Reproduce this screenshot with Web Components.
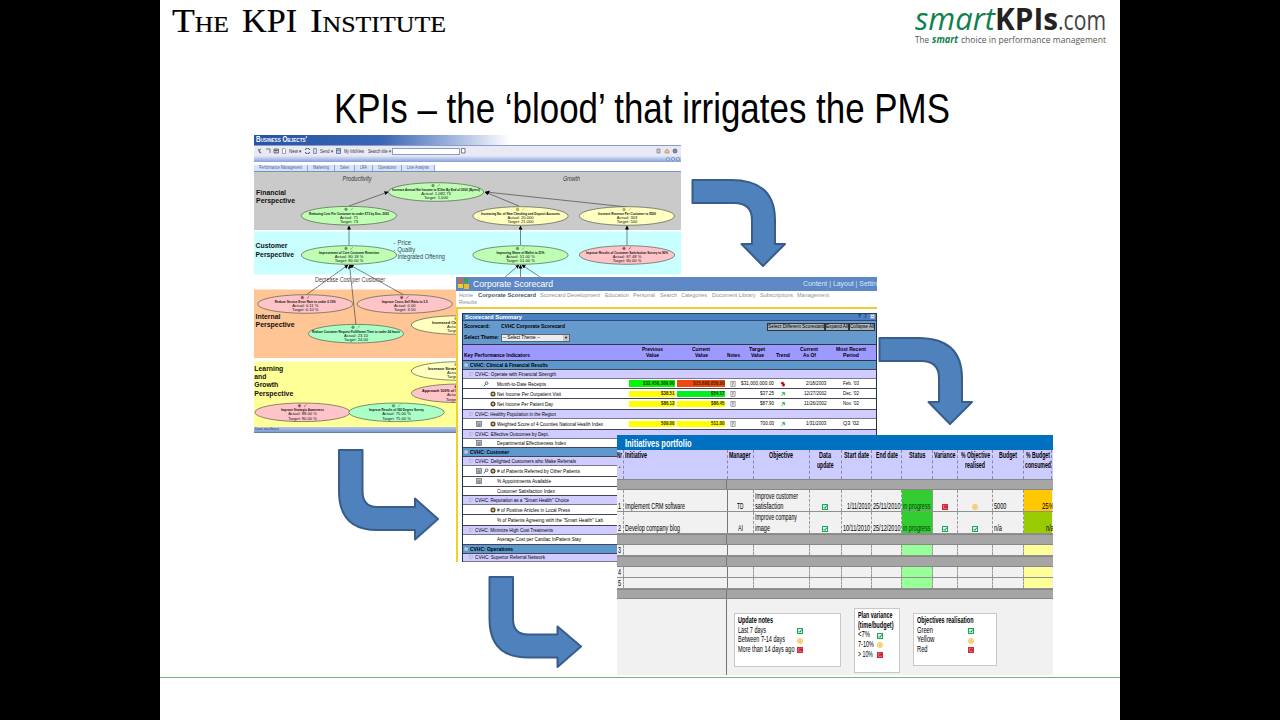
<!DOCTYPE html>
<html lang="en">
<head>
<meta charset="utf-8">
<title>KPIs</title>
<style>
  body {
    margin: 0;
    background: #000;
    overflow: hidden;
    font-family: "Liberation Sans", Arial, sans-serif;
  }
</style>
</head>
<body>
<kpi-slide>
  <brand-header slot="header"></brand-header>
  <fit-text slot="title" w="616" style="font-size:42px">KPIs – the ‘blood’ that irrigates the PMS</fit-text>
  <strategy-map style="left:94px;top:135px"></strategy-map>
  <corporate-scorecard style="left:296px;top:277px"></corporate-scorecard>
  <initiatives-portfolio style="left:457px;top:435px"></initiatives-portfolio>
  <bent-arrow kind="down" style="left:531px;top:178px"></bent-arrow>
  <bent-arrow kind="down" style="left:718px;top:336px"></bent-arrow>
  <bent-arrow kind="right" style="left:178px;top:448px"></bent-arrow>
  <bent-arrow kind="right-short" style="left:328px;top:575px"></bent-arrow>
</kpi-slide>

<script>
const fit = (text, w, size, css = "") =>
  `<fit-text w="${w}" style="font-size:${size}px;${css}">${text}</fit-text>`;

// one line of text, squeezed or stretched to the width in its "w" attribute
class FitText extends HTMLElement {
  constructor() {
    super();
    this.attachShadow({ mode: "open" }).innerHTML = `
    <style>
    :host{
        display: inline-block;
        vertical-align: top;
        line-height: 1;
        white-space: nowrap;
        flex: none;
        text-align: left;
    }
    span{
        display: inline-block;
        vertical-align: top;
        transform-origin: 0 50%;
    }
    </style><span><slot></slot></span>`;
  }

  connectedCallback() {
    const w = parseFloat(this.getAttribute("w"));
    const span = this.shadowRoot.querySelector("span");
    const real = span.getBoundingClientRect().width;
    this.style.width = w + "px";
    if (real > 0) span.style.transform = `scaleX(${w / real})`;
  }
}
customElements.define("fit-text", FitText);

class StatusIcon extends HTMLElement {
  connectedCallback() {
    const shapes = {
      ok: `<rect x=".5" y=".5" width="5" height="5" fill="#d8f5e2" stroke="#18a860"/><path d="M1.7 3.2l1.1 1.1L4.9 1.6" fill="none" stroke="#108848"/>`,
      mid: `<circle cx="3" cy="3" r="2.5" fill="#ffe9a0" stroke="#f0b83c" stroke-width=".8"/><path d="M1.8 3.8q1.2-1.2 2.4 0M2 2.2h.6M3.4 2.2h.6" fill="none" stroke="#d89820" stroke-width=".6"/>`,
      bad: `<rect x=".5" y=".5" width="5" height="5" fill="#e86874" stroke="#d82838"/><path d="M1.8 4.4L4.3 1.8M2 2.2h2.4v2" fill="none" stroke="#8c1c28" stroke-width=".8"/>`,
      note: `<rect x=".5" y=".5" width="5" height="5" fill="#c4c8d0" stroke="#606878" stroke-width=".7"/><path d="M1.5 2.2h3M1.5 3.5h3M1.5 4.6h3" stroke="#485060" stroke-width=".5"/>`,
      find: `<circle cx="3.6" cy="2.2" r="1.4" fill="#d8ecff" stroke="#304870" stroke-width=".7"/><path d="M2.6 3.2L.9 5.2" stroke="#304870" stroke-width=".9"/>`,
      ring: `<circle cx="3" cy="3" r="1.9" fill="#fff0b0" stroke="#4c3c18" stroke-width="1.2"/><circle cx="3" cy="3" r=".7" fill="#806020"/>`,
      page: `<rect x=".9" y=".3" width="4.2" height="5.4" fill="#f4f4f4" stroke="#555" stroke-width=".5"/><path d="M2 1.8h2M2 3h2M2 4.2h1" stroke="#444" stroke-width=".5"/>`,
      up: `<path d="M1.3 5.2L3.8 2M2 1.4h2.7v2.6z" fill="#30c050" stroke="#30b050" stroke-width=".7"/>`,
      down: `<path d="M1.4 1.2h2.2v1.4l1.3.4-.8 2.4-2-.8.6-1.2-1.6-.6z" fill="#c00010" stroke="#900"  stroke-width=".4"/>`,
      minus: `<rect x=".6" y=".6" width="4.8" height="4.8" fill="#eef" stroke="#8890b8" stroke-width=".6"/><path d="M1.7 3h2.6" stroke="#333" stroke-width=".7"/>`
    };
    this.attachShadow({ mode: "open" }).innerHTML = `
    <style>
    :host{
        display: block;
        width: 6px;
        height: 6px;
        flex: none;
    }
    svg{ display: block; width: 100%; height: 100%; }
    </style>
    <svg viewBox="0 0 6 6">${shapes[this.getAttribute("kind")] || ""}</svg>`;
  }
}
customElements.define("status-icon", StatusIcon);
const icon = (kind, css = "") => `<status-icon kind="${kind}" style="${css}"></status-icon>`;

class KpiSlide extends HTMLElement {
  constructor() {
    super();
    this.attachShadow({ mode: "open" }).innerHTML = `
    <style>
    :host{
        display: block;
        position: relative;
        width: 960px;
        height: 720px;
        margin: 0 auto;
        background: #fff;
        color: #000;
        overflow: hidden;
    }
    .title{
        display: flex;
        justify-content: center;
        padding-left: 4px;
        height: 42px;
        margin-top: 24px;
    }
    .rule{
        position: absolute;
        left: 0;
        right: 0;
        top: 677px;
        height: 1px;
        background: #7fb07f;
    }
    ::slotted(strategy-map), ::slotted(corporate-scorecard),
    ::slotted(initiatives-portfolio), ::slotted(bent-arrow){
        position: absolute;
    }
    </style>
    <slot name="header"></slot>
    <div class="title"><slot name="title"></slot></div>
    <slot></slot>
    <div class="rule"></div>`;
  }
}
customElements.define("kpi-slide", KpiSlide);

class BrandHeader extends HTMLElement {
  connectedCallback() {
    this.attachShadow({ mode: "open" }).innerHTML = `
    <style>
    :host{
        display: flex;
        justify-content: space-between;
        height: 64px;
        padding: 0 14px 0 12px;
        box-sizing: border-box;
    }
    .institute{
        display: flex;
        gap: 13px;
        padding-top: 4px;
        font-family: "Liberation Serif", serif;
        font-variant: small-caps;
        -webkit-text-stroke: .2px #000;
    }
    .smart{
        font-family: "Open Sans", sans-serif;
        padding-top: 3px;
        width: 191px;
    }
    .name{ display: flex; align-items: baseline; height: 32px; color: #222; }
    .tag{ display: flex; justify-content: space-between; color: #555; }
    .green{ color: #12804c; font-style: italic; }
    .tag .green{ display: flex; }
    </style>
    <div class="institute">${fit("The", 57, 33.5)}${fit("KPI", 55, 33.5)}${fit("Institute", 136, 33.5)}</div>
    <div class="smart">
      <div class="name">
        ${fit("smart", 80, 31, "color:#12804c;font-style:italic")}${fit("KPIs", 63, 30, "font-weight:700")}${fit(".com", 48, 27, "font-weight:400;color:#444")}
      </div>
      <div class="tag">
        ${fit("The", 14, 9.8)}<span class="green">${fit("smart", 26, 9.8, "font-weight:700")}</span>${fit("choice in performance management", 145, 9.8)}
      </div>
    </div>`;
  }
}
customElements.define("brand-header", BrandHeader);

class BentArrow extends HTMLElement {
  connectedCallback() {
    const paths = {
      down: "M1.5 2H40Q84 2 84 42V66H94L72 88L50.5 66H61V42Q61 25 43 25H1.5Z",
      right: "M1 2H24.5V43Q24.500 59 39 59H77V50.5L100 71L77 91.5V82H39Q1 82 1 43Z",
      "right-short": "M1.5 2H25V44Q25 59.5 40 59.5H69.5V51.5L93 71.5L69.5 92V82.5H40Q1.5 82.500 1.5 44Z"
    };
    this.attachShadow({ mode: "open" }).innerHTML = `
    <style>
    :host{ display: block; width: 104px; height: 96px; }
    svg{ display: block; }
    </style>
    <svg width="104" height="96"><path d="${paths[this.getAttribute("kind")]}" fill="#4f81bd" stroke="#385d8a" stroke-width="2" stroke-linejoin="round"/></svg>`;
  }
}
customElements.define("bent-arrow", BentArrow);

// cx, cy, fill, title, title width, actual, target
const GREEN = "#bfffb4", YELLOW = "#ffffc0", RED = "#ffc4c8", MINT = "#aaffc6";
const NODES = [
  [436, 192, GREEN, "Increase Annual Net Income to $10m By End of 2003 (Bytext)", 88, "1,082.73", "1,000"],
  [349, 215.7, GREEN, "Reducing Cost Per Customer to under $73 by Dec. 2003", 80, "71", "73"],
  [520.5, 216, YELLOW, "Increasing No. of New Checking and Deposit Accounts", 79, "20,000", "21,000"],
  [627, 216, YELLOW, "Increase Revenue Per Customer to $500", 58, "303", "500"],
  [349, 255, GREEN, "Improvement of Core Customer Retention", 60, "80.18 %", "80.00 %"],
  [520.5, 255, GREEN, "Improving Share of Wallet to 51%", 48, "51.00 %", "51.00 %"],
  [627, 255, RED, "Improve Results of Customer Satisfaction Survey to 90%", 82, "87.48 %", "90.00 %"],
  [305.3, 304, RED, "Reduce Service Error Rate to under 0.10%", 61, "0.11 %", "0.10 %"],
  [404.7, 304, RED, "Improve Cross-Sell Ratio to 3.5", 46, "0.00", "3.50"],
  [356, 333.7, MINT, "Reduce Customer Request Fulfillment Time to under 24 hours", 88, "23.10", "24.00"],
  [459, 325, YELLOW, "Increased Channel Utilization", 54, "20.00", "20.00"],
  [459, 371, YELLOW, "Increase Strategic Job Coverage", 62, "90.00", "90.00"],
  [459, 393.3, RED, "Approach 100% of Information Availability", 74, "80.00", "100.00"],
  [302.5, 412.3, RED, "Improve Strategic Awareness", 43, "88.00 %", "90.00 %"],
  [396.5, 412.3, MINT, "Improve Results of 360 Degree Survey", 55, "75.00 %", "75.00 %"]
];
const LINKS = [
  [349, 206, 388, 192], [519, 206, 485, 192], [627, 207, 486, 192],
  [349, 245, 349, 226], [520.5, 245, 520.5, 226], [627, 245, 627, 226],
  [306, 295, 348, 265], [356, 325, 349.5, 265], [404, 295, 350, 265],
  [503, 279, 519, 265], [520.5, 279, 520.5, 265], [543, 279, 522, 265]
];

class StrategyMap extends HTMLElement {
  node([cx, cy, fill, title, w, actual, target]) {
    const dot = fill === RED ? "#d03040" : fill === YELLOW ? "#e0c020" : "#50b060";
    return `<ellipse cx="${cx}" cy="${cy}" rx="47.7" ry="9.3" fill="${fill}" stroke="#55604c" stroke-width=".7"/>
      <circle cx="${cx - 3}" cy="${cy - 6.5}" r="1.3" fill="${dot}" stroke="#555" stroke-width=".4"/>
      <path d="M${cx + 1.5} ${cy - 5.5}l2.4-2.2" stroke="${dot}" stroke-width=".8"/>
      <text x="${cx - w / 2}" y="${cy - 0.9}" textLength="${w}" lengthAdjust="spacingAndGlyphs" font-weight="700">${title}</text>
      <text x="${cx}" y="${cy + 3.1}" text-anchor="middle">Actual: ${actual}</text>
      <text x="${cx}" y="${cy + 7.2}" text-anchor="middle">Target: ${target}</text>`;
  }

  label(x, y, w, text, cls = "") {
    return `<text class="${cls}" x="${x}" y="${y}" textLength="${w}" lengthAdjust="spacingAndGlyphs">${text}</text>`;
  }

  connectedCallback() {
    const tabs = [["Performance Management", 43], ["Marketing", 16], ["Sales", 9], ["LRA", 7], ["Operations", 18], ["Line Analysis", 22]];
    this.attachShadow({ mode: "open" }).innerHTML = `
    <style>
    :host{
        display: block;
        width: 427px;
        height: 301px;
        background: #fff;
    }
    .brand{
        display: flex;
        height: 10px;
        padding: 1px 0 0 2px;
        box-sizing: border-box;
        color: #fff;
        font-variant: small-caps;
        background: linear-gradient(90deg, #2653a4, #3b66b4 30%, #9db2dc 46%, #fff 60%);
    }
    .tools{
        display: flex;
        align-items: center;
        gap: 3px;
        height: 11px;
        padding: 0 3px;
        background: #e9e9f5;
        color: #333;
        box-sizing: border-box;
        border-top: 1px solid #8c9ccc;
    }
    .tools svg{ flex: none; }
    .tools i{
        width: 66px;
        height: 5px;
        border: 1px solid #8a9cc0;
        background: #fff;
        margin: 0 -2px;
    }
    .tools .end{ margin-left: auto; }
    .strip{
        height: 6px;
        background: linear-gradient(#dfe6f8, #86a0d6);
        display: flex;
        justify-content: flex-end;
        align-items: center;
        gap: 1px;
        padding-right: 1px;
    }
    .strip b{ width: 2px; height: 2px; border-radius: 2px; border: 1px solid #7c94c8; background: #dce6fa; }
    .tabs{
        display: flex;
        height: 10px;
        padding: 3px 0 0;
        box-sizing: border-box;
        border-bottom: 1px solid #7890c8;
        color: #4660a4;
    }
    .tabs div{
        display: flex;
        background: #d9e4f8;
        border-right: 1px solid #90a4d0;
        padding: 1px 5px 0;
    }
    .map{ display: block; }
    text{ font-size: 4.1px; fill: #111; }
    text.big{ font-size: 8px; font-weight: 700; }
    text.mid{ font-size: 6.8px; fill: #444; }
    text.it{ font-size: 6.8px; font-style: italic; fill: #333; }
    .status{
        height: 6px;
        background: linear-gradient(#b4c6ea, #7e9ad0);
        border-bottom: 1px solid #6c7ca0;
        padding: 0 1px;
        box-sizing: border-box;
        color: #203878;
        display: flex;
        align-items: center;
    }
    </style>
    <div class="brand">${fit("Business Objects'", 51, 8.2, "font-weight:700")}</div>
    <div class="tools">
      <svg width="22" height="6"><path d="M1 1l3 4M4 1a2 2 0 1 0 0 4M9 1h4v4M17 1h4.500v4h-4.500zM17 2.500h4.500M19 1v4" fill="none" stroke="#556" stroke-width=".8"/></svg>
      <svg width="4" height="6"><path d="M.5.500h2l1 1v4h-3z" fill="#fff" stroke="#667" stroke-width=".6"/></svg>
      ${fit("New ▾", 13, 5)}
      <svg width="5" height="6"><path d="M4.500 2a2 2 0 0 0-4 0M.5 4a2 2 0 0 0 4 0" fill="none" stroke="#246" stroke-width=".9"/></svg>
      <svg width="4" height="6"><path d="M.5.500h3v5h-3z" fill="#ccd8f4" stroke="#567" stroke-width=".6"/></svg>
      ${fit("Send ▾", 13, 5)}
      <svg width="5" height="6"><path d="M.5.500h4v5h-4zM.5 2.200h4" fill="#b8ccf0" stroke="#346" stroke-width=".6"/></svg>
      ${fit("My InfoView", 20, 5, "margin-right:1px")}
      ${fit("Search title ▾", 23, 5)}
      <i></i>
      <svg width="5" height="6"><path d="M.5.500h3.500v4.500h-3.500z" fill="#fff" stroke="#446" stroke-width=".7"/></svg>
      <svg class="end" width="22" height="6"><path d="M1 1h3v4h-3z" fill="#ccd" stroke="#778" stroke-width=".7"/><path d="M9 5V3l2-2 2 2v2z" fill="#f0c860" stroke="#987" stroke-width=".6"/><circle cx="19" cy="3" r="2" fill="#7890c8" stroke="#445" stroke-width=".6"/></svg>
    </div>
    <div class="strip"><b></b><b></b><b></b></div>
    <div class="tabs">${tabs.map(([t, w]) => `<div>${fit(t, w, 4.8)}</div>`).join("")}</div>
    <svg class="map" width="427" height="255" viewBox="254 172 427 255">
      <defs><marker id="tip" markerWidth="4" markerHeight="4" refX="3.5" refY="2" orient="auto" markerUnits="userSpaceOnUse"><path d="M0 0L4 2L0 4z"/></marker></defs>
      <rect x="254" y="172" width="427" height="58" fill="#cacaca"/>
      <rect x="254" y="231.5" width="427" height="43" fill="#c9ffff"/>
      <rect x="254" y="289.5" width="427" height="68.5" fill="#ffc595"/>
      <rect x="254" y="361.5" width="427" height="66" fill="#ffff98"/>
      ${this.label(315, 281.7, 70, "Decrease Cost per Customer", "mid")}
      ${LINKS.map(l => `<line x1="${l[0]}" y1="${l[1]}" x2="${l[2]}" y2="${l[3]}" stroke="#333" stroke-width=".6" marker-end="url(#tip)"/>`).join("")}
      ${NODES.map(n => this.node(n)).join("")}
      ${this.label(256, 194.5, 30, "Financial", "big")}
      ${this.label(256, 202.8, 39, "Perspective", "big")}
      ${this.label(255.5, 248, 32, "Customer", "big")}
      ${this.label(255.5, 256.5, 38.5, "Perspective", "big")}
      ${this.label(255.5, 318.700, 25, "Internal", "big")}
      ${this.label(255.5, 327, 39, "Perspective", "big")}
      ${this.label(254.3, 370.5, 29, "Learning", "big")}
      ${this.label(254.3, 378.8, 12, "and", "big")}
      ${this.label(254.3, 387.2, 24, "Growth", "big")}
      ${this.label(254.3, 395.6, 39, "Perspective", "big")}
      ${this.label(342.5, 181.3, 29, "Productivity", "it")}
      ${this.label(563, 181, 17, "Growth", "it")}
      ${this.label(397.5, 245, 13.5, "Price", "mid")}
      ${this.label(397.5, 252, 17.5, "Quality", "mid")}
      ${this.label(397.5, 259.3, 47.5, "Integrated Offering", "mid")}
      ${this.label(393.5, 245, 1.6, "-", "mid")}
      ${this.label(393.5, 252, 1.6, "-", "mid")}
    </svg>
    <div class="status">${fit("Done excellence", 24, 4.2)}</div>`;
  }
}
customElements.define("strategy-map", StrategyMap);

// kind, bottom edge, text, text width, icons, values
const KPI_ROWS = [
  ["group", 369.3, "CVHC: Clinical &amp; Financial Results", 78],
  ["sub", 378.7, "CVHC: Operate with Financial Strength", 81],
  ["row", 389, "Month-to-Date Receipts", 49, ["", "find", ""], ["$32,456,389.00", "#00f800", "$15,698,858.00", "#f04810", "$31,000,000.00", "down", "2/18/2003", "Feb. '03"]],
  ["row", 399.2, "Net Income Per Outpatient Visit", 64, ["", "", "ring"], ["$38.51", "#ff0", "$54.17", "#00f020", "$37.25", "up", "12/27/2002", "Dec. '02"]],
  ["row", 409.5, "Net Income Per Patient Day", 56, ["", "", "ring"], ["$86.12", "#ff0", "$86.45", "#ff0", "$87.90", "up", "11/26/2002", "Nov. '02"]],
  ["sub", 418.8, "CVHC: Healthy Population in the Region", 81],
  ["row", 429.3, "Weighted Score of 4 Counties National Health Index", 106, ["note", "", "ring"], ["509.00", "#ff0", "511.00", "#ff0", "700.00", "up", "1/31/2003", "Q3 '02"]],
  ["sub", 438.3, "CVHC: Effective Outcomes by Dept.", 74],
  ["row", 448.2, "Departmental Effectiveness Index", 69, ["note", "", ""]],
  ["group", 457.2, "CVHC: Customer", 39],
  ["sub", 465.6, "CVHC: Delighted Customers who Make Referrals", 101],
  ["row", 476.3, "# of Patients Referred by Other Patients", 83, ["note", "find", "ring"]],
  ["row", 486.6, "% Appointments Available", 54, ["note", "", ""]],
  ["row", 496, "Customer Satisfaction Index", 58, ["", "", ""]],
  ["sub", 504.7, "CVHC: Reputation as a \"Smart Health\" Choice", 94],
  ["row", 515.2, "# of Positive Articles in Local Press", 73, ["", "", "ring"]],
  ["row", 525.7, "% of Patients Agreeing with the \"Smart Health\" Lab", 106, ["", "", ""]],
  ["sub", 534.5, "CVHC: Minimize High Cost Treatments", 78],
  ["row", 544.5, "Average Cost per Cardiac InPatient Stay", 84, ["", "", ""]],
  ["group", 553.5, "CVHC: Operations", 43],
  ["sub", 562, "CVHC: Superior Referral Network", 70]
];

class CorporateScorecard extends HTMLElement {
  row([kind, , text, w, icons, v], i) {
    const top = i ? KPI_ROWS[i - 1][1] : 360.3;
    const h = `style="height:${(KPI_ROWS[i][1] - top).toFixed(1)}px"`;
    if (kind !== "row") {
      return `<div class="${kind}" ${h}>${icon("minus", "width:4px;height:4px")}${fit(text, w, 6, kind === "group" ? "font-weight:700" : "")}</div>`;
    }
    const vals = v ? `
      <span class="chip" style="background:${v[1]}">${fit(v[0], v[0].length * 2.25, 5.4, "font-weight:700")}</span>
      <span class="chip" style="background:${v[3]}">${fit(v[2], v[2].length * 2.25, 5.4, "font-weight:700")}</span>
      <span class="c">${icon("page")}</span>
      <span class="r">${fit(v[4], v[4].length * 2.35, 5.6)}</span>
      <span class="c">${icon(v[5])}</span>
      <span class="r">${fit(v[6], v[6].length * 2.25, 5.6)}</span>
      <span class="c">${fit(v[7], 16, 5.6)}</span>` : "";
    return `<div class="row" ${h}><span class="kpi">${icons.map(k => icon(k)).join("")}${fit(text, w, 6)}</span>${vals}</div>`;
  }

  connectedCallback() {
    const nav = [["Home", 14], ["Corporate Scorecard", 58, "font-weight:700;color:#44566c"], ["Scorecard Development", 60], ["Education", 24], ["Personal", 22], ["Search", 17], ["Categories", 26], ["Document Library", 43.5], ["Subscriptions", 33], ["Management", 32]];
    const heads = [["Previous", 21, "Value", 13], ["Current", 18, "Value", 13], ["", 0, "Notes", 13], ["Target", 16, "Value", 13], ["", 0, "Trend", 14], ["Current", 18, "As Of", 13], ["Most Recent", 30, "Period", 16]];
    this.attachShadow({ mode: "open" }).innerHTML = `
    <style>
    :host{
        display: block;
        width: 421px;
        height: 285px;
        background: #fff;
        overflow: hidden;
    }
    .bar{
        display: flex;
        align-items: center;
        height: 13.5px;
        background: #5d88c5;
        color: #fff;
        padding-left: 2px;
    }
    .bar svg{ margin-right: 4px; }
    .bar .menu{ display: flex; margin-left: auto; color: #d8e6fa; }
    .nav{
        display: flex;
        flex-wrap: wrap;
        align-content: flex-start;
        gap: 2px 4.5px;
        padding: 2px 30px 0 3px;
        height: 16px;
        box-sizing: border-box;
        color: #8791a0;
    }
    .body{
        border-top: 2px solid #f3c838;
        border-left: 2px solid #f6d020;
        padding: 4px 0 0 4px;
        height: 260px;
        box-sizing: border-box;
    }
    .sheet{ border-left: 1px solid #234; border-right: 1px solid #234; }
    .summary{
        height: 8.5px;
        display: flex;
        align-items: center;
        padding: 0 1px 0 2px;
        background: #4d80c2;
        border-top: 1px solid #245;
        border-bottom: 1px solid #2c4c80;
        box-sizing: border-box;
        color: #fff;
    }
    .summary span{ margin-left: auto; display: flex; gap: 3px; color: #123; }
    .pick{
        height: 23.3px;
        background: #6699cc;
        display: grid;
        grid-template: 11px 11px / 37px 1fr auto;
        align-items: center;
        padding: .5px 0 0 1px;
        box-sizing: border-box;
    }
    .btns{ display: flex; margin-right: 1px; }
    .btns span{ display: flex; border: 1px solid #333; background: #a9b4bc; padding: .5px 0; }
    .drop{
        width: 66px;
        height: 6px;
        background: #ececec;
        border: 1px solid #567;
        display: flex;
        align-items: center;
        justify-content: space-between;
        padding-left: 1px;
        font-size: 4px;
    }
    .drop b{ background: #c8c8c8; line-height: 6px; width: 6px; text-align: center; }
    .head, .row{
        display: grid;
        grid-template-columns: 165px 48px 50px 14px 34px 18px 34.5px 48.5px;
        align-items: center;
    }
    .head{
        height: 16.3px;
        background: #9c99ff;
        border-top: 1px solid #334;
        border-bottom: 1px solid #334;
        box-sizing: border-box;
    }
    .head span{ display: flex; flex-direction: column; align-items: center; justify-content: flex-end; height: 13px; gap: .8px; }
    .head .first{ align-items: flex-start; padding-left: 1px; }
    .group, .sub, .row{ box-sizing: border-box; border-bottom: 1px solid #445; }
    .group, .sub{ display: flex; align-items: center; gap: 1.5px; }
    .group{ background: #5c98cc; padding-left: 1px; }
    .sub{ background: #d0ccff; padding-left: 6px; border-bottom-color: #778; }
    .kpi{ display: flex; align-items: center; padding-left: 12.5px; }
    .kpi status-icon{ margin-right: 1px; }
    .kpi fit-text{ margin-left: .5px; }
    .chip{ display: flex; justify-content: flex-end; align-items: center; height: 6.5px; margin: 0 1px; padding-right: 1px; color: #332800; }
    .r{ display: flex; justify-content: flex-end; }
    .c{ display: flex; justify-content: center; }
    </style>
    <div class="bar">
      <svg width="11" height="11"><path d="M0 1h5v4h-5z" fill="#e06030"/><path d="M6 0h4v5h-4z" fill="#38a050"/><path d="M0 6h5v4h-5z" fill="#f0d020"/><path d="M6 6h5v5h-5z" fill="#f4b820"/></svg>
      ${fit("Corporate Scorecard", 80, 9.5)}
      <span class="menu">${fit("Content | Layout | Settin", 74, 7)}</span>
    </div>
    <div class="nav">${nav.map(([t, w, css]) => fit(t, w, 5.8, css)).join("")}${fit("Results", 18, 5.8)}</div>
    <div class="body"><div class="sheet">
      <div class="summary">${fit("Scorecard Summary", 57, 6.2, "font-weight:700")}<span>${fit("?", 3, 5.5, "font-weight:700")}${fit("⇕", 3, 5.5)}${icon("minus", "width:5px;height:5px")}</span></div>
      <div class="pick">
        ${fit("Scorecard:", 26, 5.8, "font-weight:700")}
        ${fit("CVHC Corporate Scorecard", 64, 5.8, "font-weight:700")}
        <div class="btns"><span>${fit("Select Different Scorecard", 56, 5.8)}</span><span>${fit("Expand All", 22, 5.8)}</span><span>${fit("Collapse All", 24, 5.8)}</span></div>
        ${fit("Select Theme:", 35, 5.8, "font-weight:700")}
        <div class="drop">${fit("-- Select Theme --", 37, 5.6)}<b>▼</b></div>
      </div>
      <div class="head">
        <span class="first">${fit("Key Performance Indicators", 66, 5.8, "font-weight:700")}</span>
        ${heads.map(([a, aw, b, bw]) => `<span>${a && fit(a, aw, 5.6, "font-weight:700")}${fit(b, bw, 5.6, "font-weight:700")}</span>`).join("")}
      </div>
      ${KPI_ROWS.map((r, i) => this.row(r, i)).join("")}
    </div></div>`;
  }
}
customElements.define("corporate-scorecard", CorporateScorecard);

class LegendCard extends HTMLElement {
  connectedCallback() {
    const rows = JSON.parse(this.getAttribute("rows"));
    const heads = JSON.parse(this.getAttribute("heads"));
    this.attachShadow({ mode: "open" }).innerHTML = `
    <style>
    :host{
        display: block;
        box-sizing: border-box;
        background: #fff;
        border: 1px solid #c8c8c8;
        padding: 2px 0 0 3px;
    }
    div{ display: flex; align-items: center; height: 9.7px; }
    .mark{ justify-content: space-between; width: var(--mark); }
    </style>
    ${heads.map(([t, w]) => `<div>${fit(t, w, 8.2, "font-weight:700")}</div>`).join("")}
    ${rows.map(([t, w, k]) => `<div class="mark">${fit(t, w, 8.2)}${icon(k)}</div>`).join("")}`;
  }
}
customElements.define("legend-card", LegendCard);

class InitiativesPortfolio extends HTMLElement {
  connectedCallback() {
    const heads = [[["Nr", 5], [".", 1.5]], [["Initiative", 22]], [["Manager", 21.5]], [["Objective", 24]], [["Data", 12], ["update", 16.5]], [["Start date", 25]], [["End date", 22]], [["Status", 16.5]], [["Variance", 21.5]], [["% Objective", 29], ["realised", 20]], [["Budget", 18]], [["% Budget", 24], ["consumed", 26]]];
    const t = (s, w) => fit(s, w, 8.8);
    const rows = [
      [22.5, t("1", 3), t("Implement CRM software", 60), t("TD", 6.5), t("Improve customer", 43) + t("satisfaction", 28.5), icon("ok"), t("1/11/2010", 23.5), t("25/11/2010", 27.5), t("in progress", 27.5), icon("bad"), icon("mid"), t("5000", 12.5), t("25%", 12)],
      [21.5, t("2", 3), t("Develop company blog", 55), t("AI", 5), t("Improve company", 42) + t("image", 15), icon("ok"), t("10/11/2010", 27), t("25/12/2010", 27.5), t("in progress", 27.5), icon("ok"), icon("ok"), t("n/a", 8), t("n/a", 8)],
      [11],
      [11.5, t("3", 3)],
      [11],
      [10.5, t("4", 3)],
      [11, t("5", 3)],
      [10.5]
    ];
    const body = rows.map(([h, ...cells], i) => {
      if (!cells.length) return `<div class="gap" style="height:${h}px"><span></span></div>`;
      const full = cells.length > 1;
      while (cells.length < 12) cells.push("");
      return `<div class="line ${full ? "full" : ""} r${i}" style="height:${h}px">${cells.map(c => `<span>${c}</span>`).join("")}</div>`;
    }).join("");
    this.attachShadow({ mode: "open" }).innerHTML = `
    <style>
    :host{
        display: flex;
        flex-direction: column;
        width: 435.5px;
        height: 240px;
        background: #f1f1f1;
        overflow: hidden;
    }
    .bar{
        display: flex;
        height: 14.5px;
        padding: 2.5px 0 0 8px;
        box-sizing: border-box;
        background: #0070c0;
        color: #fff;
    }
    .heads, .line{
        display: grid;
        grid-template-columns: 6.5px 104px 26px 56px 32.7px 30px 30px 30.5px 25.5px 35px 30.5px 28.8px;
        flex: none;
    }
    .heads{ height: 29.5px; background: #ccccff; }
    .heads span{
        display: flex;
        flex-direction: column;
        align-items: center;
        gap: 1.6px;
        padding-top: 1.5px;
        border-right: 1px dashed #8888a8;
    }
    .heads span:nth-child(2){ align-items: flex-start; padding-left: 1px; }
    .gap{ background: #a5a5a5; border-top: 1px solid #888; border-bottom: 1px solid #888; box-sizing: border-box; flex: none; }
    .gap span{ display: block; width: 110px; height: 100%; box-sizing: border-box; border-right: 1px solid #777; }
    .line{ border-bottom: 1px solid #909090; box-sizing: border-box; }
    .line span{
        display: flex;
        flex-direction: column;
        justify-content: flex-end;
        align-items: center;
        gap: 1.7px;
        padding: 0 1px;
        border-right: 1px dashed #999;
        box-sizing: border-box;
        min-width: 0;
        min-height: 0;
    }
    .line span:nth-child(2){ border-right: 1px solid #777; }
    .line span:nth-child(2), .line span:nth-child(4), .line span:nth-child(11){ align-items: flex-start; }
    .line span:nth-child(6), .line span:nth-child(7), .line span:nth-child(12){ align-items: flex-end; }
    .line span:nth-child(8){ background: #99ff99; color: #034003; }
    .line span:nth-child(12){ background: #ffff99; border: 0; padding-right: 0; }
    .line span:nth-child(12) fit-text{ margin-right: -2px; }
    .full span:nth-child(8){ background: #33cc33; }
    .r0 span:nth-child(12){ background: #ffc800; }
    .r1 span:nth-child(12){ background: #99cc00; }
    status-icon{ margin-bottom: 1px; }
    .foot{ display: flex; flex: 1; }
    .foot .side{ width: 110px; box-sizing: border-box; border-right: 1px solid #777; }
    .cards{ display: flex; align-items: flex-start; gap: 13px; padding: 9.3px 0 0 7px; }
    </style>
    <div class="bar">${fit("Initiatives portfolio", 66.5, 10.5, "font-weight:700")}</div>
    <div class="heads">${heads.map(h => `<span>${h.map(([s, w]) => fit(s, w, 8.5, "font-weight:700")).join("")}</span>`).join("")}</div>
    <div class="gap" style="height:10.5px"><span></span></div>
    ${body}
    <div class="foot">
      <div class="side"></div>
      <div class="cards">
        <legend-card style="width:106.5px;height:53.5px;margin-top:5px;--mark:65px" heads='[["Update notes",35]]' rows='[["Last 7 days",28,"ok"],["Between 7-14 days",47,"mid"],["More than 14 days ago",56.5,"bad"]]'></legend-card>
        <legend-card style="width:46px;height:64.5px;--mark:25.5px" heads='[["Plan variance",34.5],["(time/budget)",35.5]]' rows='[["&lt;7%",12,"ok"],["7-10%",16,"mid"],["&gt; 10%",15,"bad"]]'></legend-card>
        <legend-card style="width:84px;height:52.5px;margin-top:5px;--mark:57px" heads='[["Objectives realisation",56.5]]' rows='[["Green",16,"ok"],["Yellow",17.5,"mid"],["Red",10.5,"bad"]]'></legend-card>
      </div>
    </div>`;
  }
}
customElements.define("initiatives-portfolio", InitiativesPortfolio);
</script>
</body>
</html>
